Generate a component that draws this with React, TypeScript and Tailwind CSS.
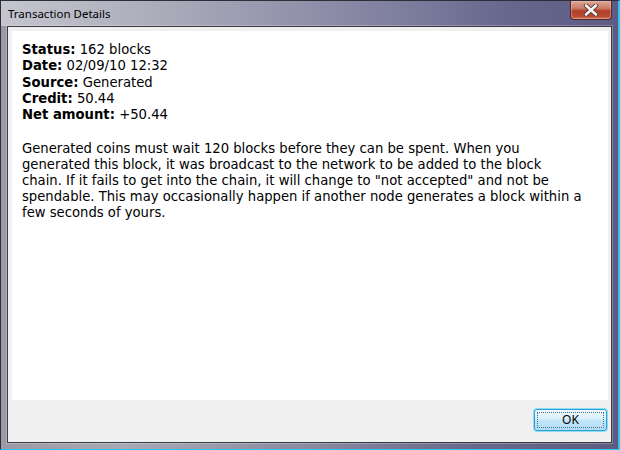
const lines = [
  { label: "Status:", value: "162 blocks" },
  { label: "Date:", value: "02/09/10 12:32" },
  { label: "Source:", value: "Generated" },
  { label: "Credit:", value: "50.44" },
  { label: "Net amount:", value: "+50.44" },
];

const message = [
  "Generated coins must wait 120 blocks before they can be spent. When you",
  "generated this block, it was broadcast to the network to be added to the block",
  'chain. If it fails to get into the chain, it will change to "not accepted" and not be',
  "spendable. This may occasionally happen if another node generates a block within a",
  "few seconds of yours.",
];

const CloseButton = () => (
  <div className="absolute right-[6px] top-0 w-[42px] h-[19px] rounded-b-[4px] border border-t-0 border-[#4a2a2a] bg-[linear-gradient(to_bottom,#dca898_0%,#cc7c68_40%,#b0402a_55%,#b84a32_85%,#d27a5e_100%)] shadow-[inset_0_0_0_1px_rgba(255,200,190,0.4)] flex items-center justify-center">
    <svg width="16" height="12" viewBox="0 0 16 12">
      <path
        d="M3 1.5 L13 10.5 M13 1.5 L3 10.5"
        stroke="#5a3a36"
        strokeWidth="4.4"
        strokeLinecap="round"
      />
      <path
        d="M3 1.5 L13 10.5 M13 1.5 L3 10.5"
        stroke="#f4f4f4"
        strokeWidth="2.6"
        strokeLinecap="round"
      />
    </svg>
  </div>
);

const App = () => {
  return (
    <div className="w-[620px] h-[450px] relative overflow-hidden flex flex-col border border-[#2e2e38] border-r-2 border-r-[#2ec3f0] border-b-[#2ec3f0] bg-[linear-gradient(to_right,#9a9aa6_0%,#a8a9b6_20%,#8a8aa0_50%,#6a6a8c_75%,#5c5c82_100%)]">
      <div className="h-[25px] shrink-0 flex items-center pl-[7px] bg-[linear-gradient(to_right,#c4c5ce_0%,#acadbb_25%,#8a8aa6_55%,#64648c_85%,#5c5c84_100%)]">
        <span className="text-[11.5px] text-black font-['Noto_Sans',sans-serif] leading-none mt-[1px]">
          Transaction Details
        </span>
        <CloseButton />
      </div>
      <div className="flex-1 mx-[6px] mb-[6px] border border-[#3a3a40] shadow-[0_0_0_1px_rgba(255,255,255,0.25)] bg-[#f0f0f0] flex flex-col p-[4px] pr-[3px]">
        <div className="flex-1 bg-white pl-[10px] pt-[11px] font-['DejaVu_Sans',sans-serif] text-[13.2px] leading-[16.3px] text-black">
          <div className="flex flex-col">
            {lines.map((line, index) => (
              <div key={index}>
                <span className="font-bold">{line.label}</span> {line.value}
              </div>
            ))}
          </div>
          <div className="mt-[18px] leading-[16px] flex flex-col whitespace-nowrap">
            {message.map((text, index) => (
              <div key={index}>{text}</div>
            ))}
          </div>
        </div>
        <div className="h-[38px] shrink-0 flex items-center justify-end pr-[1px]">
          <button className="w-[73px] h-[22px] rounded-[3px] border border-[#2aa0d8] bg-[linear-gradient(to_bottom,#eef8fd_0%,#dcf0fb_45%,#c2e6f8_50%,#b4def5_100%)] shadow-[0_0_0_1px_#8fdcf5] p-[2px] mt-[2px]">
            <div className="w-full h-full border border-dotted border-[#4a6a80] flex items-center justify-center font-['Noto_Sans',sans-serif] text-[12px] leading-none text-black">
              OK
            </div>
          </button>
        </div>
      </div>
    </div>
  );
};

export default App;
